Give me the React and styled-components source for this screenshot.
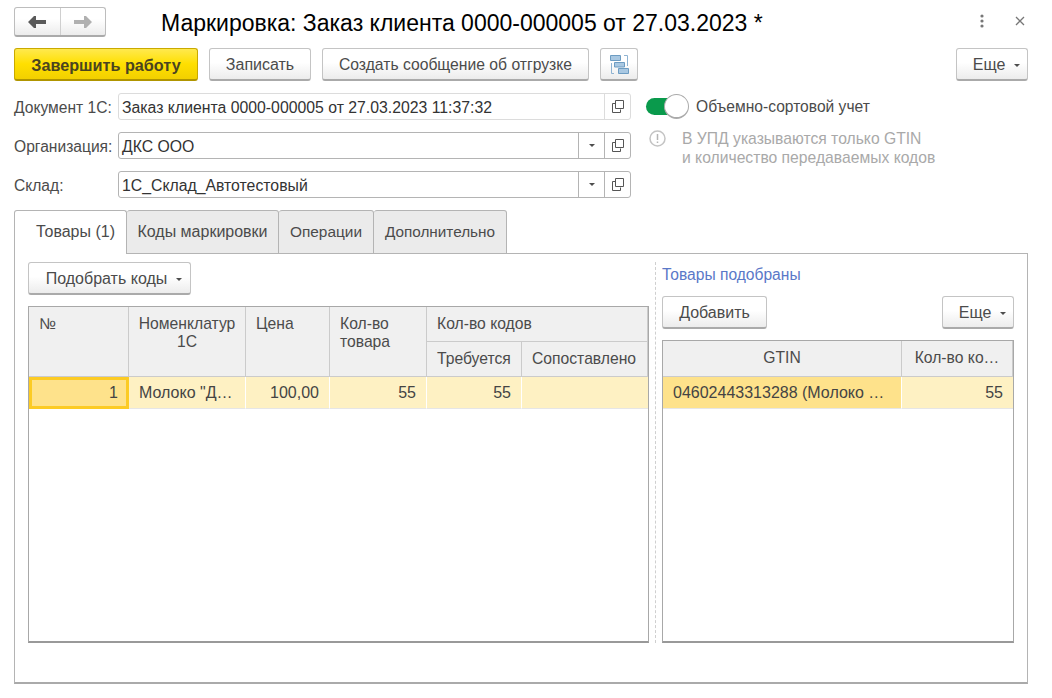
import styled, { createGlobalStyle } from 'styled-components';

const GlobalStyle = createGlobalStyle`
  html, body {
    margin: 0;
    padding: 0;
    background: #fff;
  }
  * {
    box-sizing: border-box;
  }
`;

const Page = styled.div`
  width: 1052px;
  height: 698px;
  padding: 7px 24px 14px 14px;
  display: flex;
  flex-direction: column;
  font-family: 'Liberation Sans', Arial, sans-serif;
  font-size: 15.6px;
  color: #4b4b4b;
  overflow: hidden;
`;

const TitleBar = styled.div`
  height: 30px;
  display: flex;
  align-items: center;
  margin-bottom: 11px;
`;

const NavGroup = styled.div`
  width: 92px;
  height: 30px;
  display: flex;
  border: 1px solid #bdbdbd;
  border-bottom: 2px solid #aaa;
  border-radius: 3px;
  background: linear-gradient(#fff 40%, #ececec);
`;

const NavButton = styled.div`
  flex: 1;
  display: flex;
  align-items: center;
  justify-content: center;
  & + & {
    border-left: 1px solid #cfcfcf;
  }
`;

const Title = styled.h1`
  margin: 0 0 0 55px;
  padding-top: 2px;
  flex: 1;
  font-size: 23px;
  font-weight: 400;
  color: #000;
  white-space: nowrap;
`;

const WindowIcons = styled.div`
  display: flex;
  align-items: center;
  gap: 31px;
  padding: 0 3px 2px 0;
`;

const Toolbar = styled.div`
  height: 33px;
  display: flex;
  align-items: stretch;
  gap: 11px;
  margin-bottom: 12px;
`;

const Button = styled.div`
  display: flex;
  align-items: center;
  justify-content: center;
  gap: 9px;
  width: ${(p) => p.$w}px;
  padding-top: 2px;
  padding-left: ${(p) => (p.$menu ? 9 : 0)}px;
  border: 1px solid #c4c4c4;
  border-bottom: 2px solid #aaa;
  border-radius: 3px;
  background: linear-gradient(#fff 45%, #ececec);
  font-size: 16px;
  color: #4b4b4b;
  white-space: nowrap;
`;

const LongButton = styled(Button)`
  font-size: 15.7px;
`;

const PrimaryButton = styled(Button)`
  border: 1px solid #c9a900;
  border-bottom: 2px solid #b09500;
  background: linear-gradient(#ffe94e, #ffdf00 50%, #f2d000);
  font-size: 16.2px;
  font-weight: 700;
  color: #4a4420;
`;

const IconButton = styled(Button)`
  padding-top: 0;
`;

const Spacer = styled.div`
  flex: 1;
`;

const Caret = styled.span`
  width: 0;
  height: 0;
  border-left: 3px solid transparent;
  border-right: 3px solid transparent;
  border-top: 3px solid #4d4d4d;
`;

const HeadSection = styled.div`
  display: flex;
  margin-bottom: 12px;
`;

const FormColumn = styled.div`
  width: 617px;
  display: flex;
  flex-direction: column;
  gap: 12px;
`;

const FormRow = styled.div`
  height: 27px;
  display: flex;
  align-items: center;
`;

const FieldLabel = styled.label`
  width: 104px;
  flex: none;
  padding-top: 2px;
`;

const Field = styled.div`
  flex: 1;
  height: 27px;
  display: flex;
  border: 1px solid ${(p) => (p.$readonly ? '#dcdcdc' : '#b4b4b4')};
  border-radius: 3px;
  background: #fff;
`;

const FieldValue = styled.div`
  flex: 1;
  padding-left: 3px;
  font-size: 15.8px;
  line-height: 27px;
  color: #333;
  white-space: nowrap;
`;

const FieldButton = styled.div`
  width: 26px;
  flex: none;
  display: flex;
  align-items: center;
  justify-content: center;
  border-left: 1px solid ${(p) => (p.$readonly ? '#dcdcdc' : '#b4b4b4')};
`;

const OptionColumn = styled.div`
  margin-left: 15px;
  padding-top: 1px;
  display: flex;
  flex-direction: column;
`;

const ToggleRow = styled.div`
  height: 25px;
  display: flex;
  align-items: center;
  gap: 7px;
  margin-bottom: 10px;
`;

const ToggleTrack = styled.div`
  width: 34px;
  height: 17px;
  margin-right: 9px;
  display: flex;
  align-items: center;
  justify-content: flex-end;
  border-radius: 9px 0 0 9px;
  background: #0a9a4c;
`;

const ToggleKnob = styled.div`
  width: 25px;
  height: 25px;
  flex: none;
  margin-right: -9px;
  border-radius: 50%;
  background: #fff;
  border: 1px solid #aaa;
  border-bottom-width: 2px;
`;

const NoticeRow = styled.div`
  display: flex;
  gap: 16px;
  padding-left: 3px;
  font-size: 15.7px;
  color: #a9a9a9;
  line-height: 19px;
`;

const NoticeIcon = styled.span`
  display: block;
  height: 17px;
  margin-top: 1px;
`;

const TabBar = styled.div`
  height: 44px;
  display: flex;
  flex: none;
`;

const Tab = styled.div`
  width: ${(p) => p.$w}px;
  display: flex;
  align-items: center;
  justify-content: center;
  padding-bottom: 1px;
  padding-left: ${(p) => (p.$first ? 10 : 0)}px;
  border: 1px solid #b4b4b4;
  border-left-width: ${(p) => (p.$first ? 1 : 0)}px;
  border-bottom-width: ${(p) => (p.$active ? 0 : 1)}px;
  border-radius: 3px 3px 0 0;
  background: ${(p) => (p.$active ? '#fff' : '#ebebeb')};
  font-size: ${(p) => p.$size}px;
  white-space: nowrap;
`;

const TabFiller = styled.div`
  flex: 1;
  border-bottom: 1px solid #b4b4b4;
`;

const TabPanel = styled.div`
  flex: 1;
  min-height: 0;
  padding: 8px 13px 39px 13px;
  display: flex;
  border: 1px solid #b4b4b4;
  border-top: 0;
  border-bottom: 2px solid #aaa;
`;

const LeftPane = styled.div`
  width: 621px;
  flex: none;
  display: flex;
  flex-direction: column;
`;

const PaneDivider = styled.div`
  width: 1px;
  flex: none;
  margin: 0 6px;
  border-left: 1px dashed #cfcfcf;
`;

const RightPane = styled.div`
  flex: 1;
  min-width: 0;
  display: flex;
  flex-direction: column;
`;

const PaneToolbar = styled(Toolbar)`
  flex: none;
  justify-content: ${(p) => (p.$split ? 'space-between' : 'flex-start')};
  margin-bottom: ${(p) => p.$gap}px;
`;

const StatusLink = styled.div`
  height: 34px;
  padding-top: 4px;
  flex: none;
  color: #5a78c8;
`;

const Table = styled.div`
  flex: 1;
  min-height: 0;
  display: grid;
  grid-template-columns: ${(p) => p.$columns};
  grid-template-rows: ${(p) => p.$rows};
  border: 1px solid #a8a8a8;
  border-bottom: 2px solid #999;
`;

const HeadCell = styled.div`
  grid-column: ${(p) => p.$col || 'auto'};
  grid-row: ${(p) => p.$row || 'auto'};
  padding: ${(p) => (p.$center ? '8px 4px 0' : '8px 10px 0')};
  font-size: 15.7px;
  line-height: 18px;
  text-align: ${(p) => (p.$center ? 'center' : 'left')};
  background: #f0f0f0;
  border-right: 1px solid #cbcbcb;
  border-bottom: 1px solid #cbcbcb;
  white-space: nowrap;
  overflow: hidden;
`;

const BodyCell = styled.div`
  display: flex;
  align-items: center;
  justify-content: ${(p) => (p.$right ? 'flex-end' : 'flex-start')};
  padding: 0 10px;
  background: ${(p) => (p.$current ? '#fee28b' : '#fef1c3')};
  border-right: 1px solid #fff;
  border-bottom: 1px solid #e6e6e6;
  font-size: 16px;
  color: #444;
  white-space: nowrap;
  &:last-child {
    border-right: 0;
  }
`;

const FocusedCell = styled(BodyCell)`
  border: 3px solid #fccb24;
  padding-right: 8px;
  background: #fee28b;
`;

const CopyIcon = () => (
  <svg width="13" height="13" viewBox="0 0 13 13" fill="none" stroke="#555" aria-hidden>
    <path d="M4.5 .5h8v8h-8z" />
    <path d="M4.5 3.5h-3v9h8v-3" />
  </svg>
);

const BackArrow = () => (
  <svg width="18" height="12" viewBox="0 0 18 12" fill="#5a5a5a" aria-hidden>
    <path d="M0 6 6 0h2v4h10v4H8v4H6z" />
  </svg>
);

const ForwardArrow = () => (
  <svg width="18" height="12" viewBox="0 0 18 12" fill="#b0b0b0" aria-hidden>
    <path d="M18 6 12 0h-2v4H0v4h10v4h2z" />
  </svg>
);

const DotsIcon = () => (
  <svg width="4" height="14" viewBox="0 0 4 14" fill="#777" aria-hidden>
    <circle cx="2" cy="2" r="1.6" />
    <circle cx="2" cy="7" r="1.6" />
    <circle cx="2" cy="12" r="1.6" />
  </svg>
);

const CloseIcon = () => (
  <svg width="10" height="10" viewBox="0 0 10 10" stroke="#777" strokeWidth="1.3" aria-hidden>
    <path d="M1 1l8 8M9 1 1 9" />
  </svg>
);

const StructureIcon = () => (
  <svg width="19" height="19" viewBox="0 0 19 19" fill="none" aria-hidden>
    <path d="M4 18.500H1.500V8M14 .5h3.500V11" stroke="#8fb3d2" />
    <path d="M.5.5h10v5H.5zM4.500 7.500h10v4.500h-10zM8.500 13.500h10v5h-10z" fill="#a9c8e2" stroke="#6d9cc2" />
  </svg>
);

const InfoIcon = () => (
  <svg width="17" height="17" viewBox="0 0 17 17" fill="none" aria-hidden>
    <circle cx="8.500" cy="8.500" r="7.500" stroke="#c4c4c4" strokeWidth="1.500" />
    <path d="M8.500 4v6M8.500 11.500v1.500" stroke="#b5b5b5" strokeWidth="1.500" />
  </svg>
);

export default function App() {
  return (
    <Page>
      <GlobalStyle />
      <TitleBar>
        <NavGroup>
          <NavButton><BackArrow /></NavButton>
          <NavButton><ForwardArrow /></NavButton>
        </NavGroup>
        <Title>Маркировка: Заказ клиента 0000-000005 от 27.03.2023 *</Title>
        <WindowIcons>
          <DotsIcon />
          <CloseIcon />
        </WindowIcons>
      </TitleBar>

      <Toolbar>
        <PrimaryButton $w={184}>Завершить работу</PrimaryButton>
        <Button $w={102}>Записать</Button>
        <LongButton $w={267}>Создать сообщение об отгрузке</LongButton>
        <IconButton $w={38}><StructureIcon /></IconButton>
        <Spacer />
        <Button $w={72} $menu>Еще <Caret /></Button>
      </Toolbar>

      <HeadSection>
        <FormColumn>
          <FormRow>
            <FieldLabel>Документ 1С:</FieldLabel>
            <Field $readonly>
              <FieldValue>Заказ клиента 0000-000005 от 27.03.2023 11:37:32</FieldValue>
              <FieldButton $readonly><CopyIcon /></FieldButton>
            </Field>
          </FormRow>
          <FormRow>
            <FieldLabel>Организация:</FieldLabel>
            <Field>
              <FieldValue>ДКС ООО</FieldValue>
              <FieldButton><Caret /></FieldButton>
              <FieldButton><CopyIcon /></FieldButton>
            </Field>
          </FormRow>
          <FormRow>
            <FieldLabel>Склад:</FieldLabel>
            <Field>
              <FieldValue>1С_Склад_Автотестовый</FieldValue>
              <FieldButton><Caret /></FieldButton>
              <FieldButton><CopyIcon /></FieldButton>
            </Field>
          </FormRow>
        </FormColumn>

        <OptionColumn>
          <ToggleRow>
            <ToggleTrack><ToggleKnob /></ToggleTrack>
            Объемно-сортовой учет
          </ToggleRow>
          <NoticeRow>
            <NoticeIcon><InfoIcon /></NoticeIcon>
            <div>
              В УПД указываются только GTIN
              <br />
              и количество передаваемых кодов
            </div>
          </NoticeRow>
        </OptionColumn>
      </HeadSection>

      <TabBar>
        <Tab $w={113} $size={16} $first $active>Товары (1)</Tab>
        <Tab $w={152} $size={16}>Коды маркировки</Tab>
        <Tab $w={95} $size={15.4}>Операции</Tab>
        <Tab $w={133} $size={15.3}>Дополнительно</Tab>
        <TabFiller />
      </TabBar>

      <TabPanel>
        <LeftPane>
          <PaneToolbar $gap={11}>
            <Button $w={163} $menu>Подобрать коды <Caret /></Button>
          </PaneToolbar>
          <Table $columns="100px 117px 84px 97px 95px 1fr" $rows="35px 35px 32px 1fr">
            <HeadCell $col="1" $row="1 / 3">№</HeadCell>
            <HeadCell $col="2" $row="1 / 3" $center>Номенклатур<br />1С</HeadCell>
            <HeadCell $col="3" $row="1 / 3">Цена</HeadCell>
            <HeadCell $col="4" $row="1 / 3">Кол-во<br />товара</HeadCell>
            <HeadCell $col="5 / 7" $row="1">Кол-во кодов</HeadCell>
            <HeadCell $col="5" $row="2">Требуется</HeadCell>
            <HeadCell $col="6" $row="2">Сопоставлено</HeadCell>
            <FocusedCell $right>1</FocusedCell>
            <BodyCell>Молоко "Д…</BodyCell>
            <BodyCell $right>100,00</BodyCell>
            <BodyCell $right>55</BodyCell>
            <BodyCell $right>55</BodyCell>
            <BodyCell />
          </Table>
        </LeftPane>
        <PaneDivider />
        <RightPane>
          <StatusLink>Товары подобраны</StatusLink>
          <PaneToolbar $split $gap={11}>
            <Button $w={105}>Добавить</Button>
            <Button $w={72} $menu>Еще <Caret /></Button>
          </PaneToolbar>
          <Table $columns="239px 1fr" $rows="36px 32px 1fr">
            <HeadCell $center>GTIN</HeadCell>
            <HeadCell $center>Кол-во ко…</HeadCell>
            <BodyCell $current>04602443313288 (Молоко …</BodyCell>
            <BodyCell $right>55</BodyCell>
          </Table>
        </RightPane>
      </TabPanel>
    </Page>
  );
}
